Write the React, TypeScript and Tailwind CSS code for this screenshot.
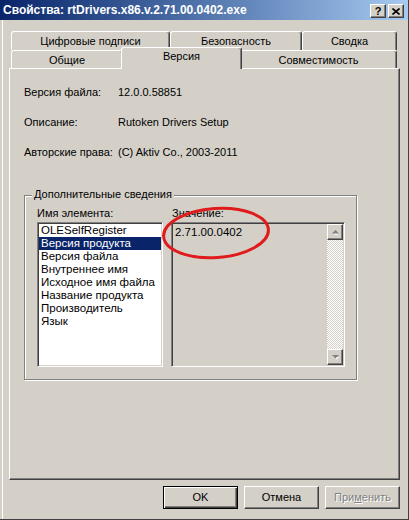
import React from "react";

const items = [
  "OLESelfRegister",
  "Версия продукта",
  "Версия файла",
  "Внутреннее имя",
  "Исходное имя файла",
  "Название продукта",
  "Производитель",
  "Язык",
];

const raised =
  "bg-[#d4d0c8] border-t border-l border-t-white border-l-white border-r border-b border-r-[#404040] border-b-[#404040] shadow-[inset_-1px_-1px_#808080]";

const sunken =
  "border border-t-[#808080] border-l-[#808080] border-r-white border-b-white shadow-[inset_1px_1px_#404040,inset_-1px_-1px_#d4d0c8]";

function Tab({ label, w, selected }: { label: string; w: string; selected?: boolean }) {
  return (
    <div
      className={`${w} ${
        selected ? "h-[22px] -mx-[2px] -mb-[1px] relative z-10 pb-[4px]" : "h-full pt-[1px]"
      } bg-[#d4d0c8] rounded-t-[3px] border-t border-l border-white border-r border-r-[#404040] shadow-[inset_-1px_0_#808080] flex items-center justify-center`}
    >
      {label}
    </div>
  );
}

function ScrollBtn({ down }: { down?: boolean }) {
  return (
    <div className={`w-[16px] h-[16px] ${raised} flex items-center justify-center`}>
      <svg width="9" height="6" viewBox="0 0 9 6">
        {down ? (
          <>
            <path d="M2 2h5l-2.5 2.5z" fill="#fff" transform="translate(1,1)" />
            <path d="M1 1h7l-3.5 3.5z" fill="#808080" />
          </>
        ) : (
          <>
            <path d="M1.5 4.5h5l-2.5-2.5z" fill="#fff" transform="translate(1,1)" />
            <path d="M1 4.5h7l-3.5-3.5z" fill="#808080" />
          </>
        )}
      </svg>
    </div>
  );
}

export default function App() {
  return (
    <div
      className="w-[409px] h-[520px] bg-[#d4d0c8] border-r border-b border-[#404040] text-[11px] text-black flex flex-col overflow-hidden"
      style={{ fontFamily: '"Liberation Sans", Arial, sans-serif' }}
    >
      {/* title bar */}
      <div className="h-[20px] shrink-0 bg-linear-to-r from-[#0a246a] to-[#a6caf0] flex items-center pl-[3px] pr-[4px]">
        <span className="text-white font-bold text-[12px] flex-1">
          Свойства: rtDrivers.x86.v.2.71.00.0402.exe
        </span>
        <div className="flex gap-[2px] mt-[2px]">
          <div className={`w-[16px] h-[14px] ${raised} flex items-center justify-center font-bold text-[11px] leading-none`}>
            ?
          </div>
          <div className={`w-[16px] h-[14px] ${raised} flex items-center justify-center`}>
            <svg width="8" height="7" viewBox="0 0 8 7">
              <path d="M0.5 0.5l7 6M7.5 0.5l-7 6" stroke="#000" strokeWidth="1.6" />
            </svg>
          </div>
        </div>
      </div>

      <div className="flex-1 ml-[2px] border-l border-white flex flex-col">
        {/* tabs */}
        <div className="mt-[11px] ml-[8px] flex flex-col">
          <div className="flex h-[19px]">
            <Tab label="Цифровые подписи" w="w-[159px]" />
            <Tab label="Безопасность" w="w-[132px]" />
            <Tab label="Сводка" w="w-[95px]" />
          </div>
          <div className="flex h-[18px] items-start">
            <Tab label="Общие" w="w-[112px]" />
            <div className="-mt-[3px] flex">
              <Tab label="Версия" w="w-[121px]" selected />
            </div>
            <Tab label="Совместимость" w="w-[157px]" />
          </div>
        </div>

        {/* panel */}
        <div className="ml-[6px] w-[391px] h-[412px] border-t border-l border-white border-r border-b border-r-[#404040] border-b-[#404040] shadow-[inset_-1px_-1px_#808080] pl-[14px] pt-[17px]">
          <div className="grid grid-cols-[94px_1fr] gap-y-[17px] leading-[13px]">
            <span>Версия файла:</span>
            <span>12.0.0.58851</span>
            <span>Описание:</span>
            <span>Rutoken Drivers Setup</span>
            <span>Авторские права:</span>
            <span>(C) Aktiv Co., 2003-2011</span>
          </div>

          {/* group box */}
          <div className="relative mt-[36px] w-[333px] h-[185px] border border-[#808080] shadow-[inset_1px_1px_#fff,1px_1px_#fff] pt-[11px] pl-[12px]">
            <span className="absolute -top-[8px] left-[7px] px-[2px] bg-[#d4d0c8] leading-[13px]">
              Дополнительные сведения
            </span>
            <div className="flex gap-[8px]">
              <div className="flex flex-col">
                <span className="leading-[13px] mb-[2px]">Имя элемента:</span>
                <div className={`w-[126px] h-[145px] bg-white ${sunken} p-[1px]`}>
                  {items.map((it) => (
                    <div
                      key={it}
                      className={`h-[13px] leading-[13px] pl-[2px] text-[11.5px] ${
                        it === "Версия продукта" ? "bg-[#0a246a] text-white" : ""
                      }`}
                    >
                      {it}
                    </div>
                  ))}
                </div>
              </div>
              <div className="flex flex-col">
                <span className="leading-[13px] mb-[2px] pl-[1px]">Значение:</span>
                <div className={`w-[174px] h-[145px] bg-[#d4d0c8] ${sunken} p-[1px] flex`}>
                  <div className="flex-1 pl-[2px] pt-[2px] text-[11.5px] leading-[13px]">2.71.00.0402</div>
                  <div className="w-[16px] flex flex-col">
                    <ScrollBtn />
                    <div className="flex-1 bg-[repeating-conic-gradient(#d4d0c8_0_25%,#ffffff_0_50%)] [background-size:2px_2px]" />
                    <ScrollBtn down />
                  </div>
                </div>
              </div>
            </div>
            {/* red marker ellipse */}
            <svg
              className="absolute left-[133px] top-[8px] pointer-events-none"
              width="116"
              height="58"
              viewBox="0 0 116 58"
            >
              <ellipse
                cx="58"
                cy="29"
                rx="52.5"
                ry="24.5"
                fill="none"
                stroke="#e01b1b"
                strokeWidth="3"
                transform="rotate(-4 58 29)"
              />
            </svg>
          </div>
        </div>

        {/* buttons */}
        <div className="mt-[6px] ml-[160px] flex gap-[6px]">
          <div className="w-[75px] h-[23px] border border-black shadow-[inset_1px_1px_#fff,inset_-1px_-1px_#404040,inset_-2px_-2px_#808080] flex items-center justify-center">
            OK
          </div>
          <div className={`w-[75px] h-[23px] ${raised} flex items-center justify-center`}>Отмена</div>
          <div
            className={`w-[75px] h-[23px] ${raised} flex items-center justify-center text-[#808080] [text-shadow:1px_1px_#fff]`}
          >
            При<span className="underline">м</span>енить
          </div>
        </div>
      </div>
    </div>
  );
}
